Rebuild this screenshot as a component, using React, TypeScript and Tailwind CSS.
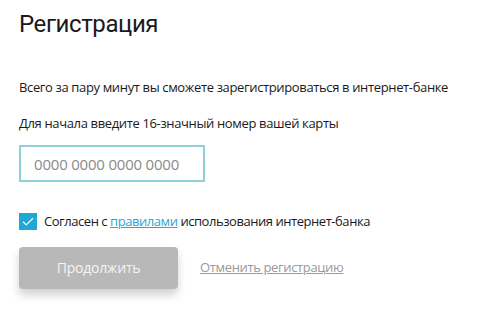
import { Check } from "lucide-react";

export default function App() {
  return (
    <div className="w-[480px] h-[314px] bg-white pl-[19px] pt-[7px] font-['Open_Sans',sans-serif] text-[#1a1a1a]">
      <h1 className="font-['Roboto',sans-serif] text-[24px] leading-[34px] tracking-[-0.4px]">Регистрация</h1>

      <p className="mt-[37px] text-[13px] leading-[18px] tracking-[-0.36px]">
        Всего за пару минут вы сможете зарегистрироваться в интернет-банке
      </p>
      <p className="mt-[18px] text-[13px] leading-[18px] tracking-[-0.36px]">
        Для начала введите 16-значный номер вашей карты
      </p>

      <input
        className="mt-[13px] block w-[186px] h-[37px] border-2 border-[#8fd0d8] px-[13px] text-[15px] tracking-[-0.2px] text-[#333] placeholder:text-[#8a8a8a] outline-none"
        placeholder="0000 0000 0000 0000"
      />

      <label className="mt-[30px] flex items-center gap-[7px] text-[13px] tracking-[-0.45px]">
        <span className="flex h-[17px] w-[18px] items-center justify-center bg-[#1ea8d6]">
          <Check className="h-[14px] w-[14px] text-white" strokeWidth={2} />
        </span>
        <span>
          Согласен с{" "}
          <a href="#" className="text-[#2aa6d2] underline">правилами</a>{" "}
          использования интернет-банка
        </span>
      </label>

      <div className="mt-[15px] flex items-center gap-[22px]">
        <button className="h-[42px] w-[159px] rounded-[4px] bg-[#b8b8b8] text-[14px] tracking-[-0.2px] text-[#f4f4f4] shadow-[0_6px_8px_rgba(0,0,0,0.18)]">
          Продолжить
        </button>
        <a href="#" className="text-[13px] tracking-[-0.36px] text-[#9a9a9a] underline">
          Отменить регистрацию
        </a>
      </div>
    </div>
  );
}
